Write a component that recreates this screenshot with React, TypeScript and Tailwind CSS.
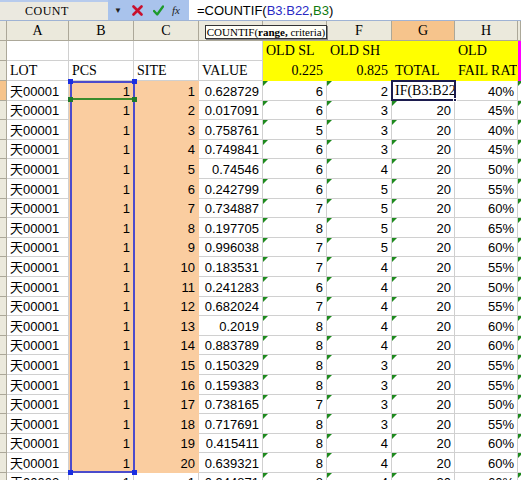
import React from 'react'
import clsx from 'clsx'

const GRID = 'grid grid-cols-[7px_62px_65px_65px_64px_64px_65px_63px_63px_1fr]'
const SERIF = "font-['Liberation_Serif','Noto_Sans_CJK_TC',serif] text-[14px]"
const SANS = "font-['Liberation_Sans','Noto_Sans_CJK_TC',sans-serif] text-[13px]"

const data: [string, number, number, number][] = [
  ['0.628729', 6, 2, 40],
  ['0.017091', 6, 3, 45],
  ['0.758761', 5, 3, 40],
  ['0.749841', 6, 3, 45],
  ['0.74546', 6, 4, 50],
  ['0.242799', 6, 5, 55],
  ['0.734887', 7, 5, 60],
  ['0.197705', 8, 5, 65],
  ['0.996038', 7, 5, 60],
  ['0.183531', 7, 4, 55],
  ['0.241283', 6, 4, 50],
  ['0.682024', 7, 4, 55],
  ['0.2019', 8, 4, 60],
  ['0.883789', 8, 4, 60],
  ['0.150329', 8, 3, 55],
  ['0.159383', 8, 3, 55],
  ['0.738165', 7, 3, 50],
  ['0.717691', 8, 3, 55],
  ['0.415411', 8, 4, 60],
  ['0.639321', 8, 4, 60],
]

type CellProps = {
  children?: React.ReactNode
  className?: string
  right?: boolean
  mark?: boolean
}

// one worksheet cell, gridline on right and bottom
const Cell = ({ children, className, right, mark }: CellProps) => (
  <div
    className={clsx(
      'relative flex items-end pb-[2px] px-[3px] leading-none overflow-hidden whitespace-nowrap border-r border-b border-[#d0d0d0] text-black',
      right && 'justify-end',
      className
    )}
  >
    {mark && (
      <span className="absolute left-0 top-0 w-0 h-0 border-t-[5px] border-r-[5px] border-t-[#1e8a1e] border-r-transparent" />
    )}
    {children}
  </div>
)

const RowHead = ({ active }: { active?: boolean }) => (
  <div
    className={clsx(
      'border-r border-b border-[#aca899]',
      active ? 'bg-[#f6c48c]' : 'bg-[#ebe9dc]'
    )}
  />
)

const DataRow = ({ i, row, lot }: { i: number; row: [string, number, number, number]; lot: string }) => (
  <div className={clsx(GRID, 'h-[19.6px]')}>
    <RowHead active={i === 0} />
    <Cell className={SANS}>{lot}</Cell>
    <Cell right className={clsx(SANS, 'bg-[#facda0] border-transparent')}>1</Cell>
    <Cell right className={clsx(SANS, 'bg-[#facda0] border-transparent')}>{i + 1}</Cell>
    <Cell right className={SANS}>{row[0]}</Cell>
    <Cell right mark className={SANS}>{row[1]}</Cell>
    <Cell right mark className={SANS}>{row[2]}</Cell>
    {i === 0 ? (
      <Cell className={SERIF}>IF(B3:B22</Cell>
    ) : (
      <Cell right mark className={SANS}>20</Cell>
    )}
    <Cell right className={SANS}>{row[3]}%</Cell>
    <Cell mark />
  </div>
)

const App = () => {
  return (
    <div className="relative w-[521px] h-[480px] overflow-hidden bg-white">
      {/* Formula bar */}
      <div className="flex h-[21px] border-b border-[#9fb3d4]">
        <div className={clsx("w-[108px] bg-[#ebe9e0] border-t-2 border-[#b7cbed] flex items-center pl-[25px] text-[12px] font-['Liberation_Serif',serif] tracking-[0.5px]")}>
          COUNT
        </div>
        <div className="w-[81px] bg-[#a9c3ec] flex items-center">
          <span className="ml-[6px] text-[8px] text-[#222]">▼</span>
          <svg className="ml-[10px]" width="11" height="11" viewBox="0 0 11 11">
            <path d="M1.5 1.5 L9.5 9.5 M9.5 1.5 L1.5 9.5" stroke="#c8102e" strokeWidth="2.6" strokeLinecap="round" />
          </svg>
          <svg className="ml-[10px]" width="11" height="11" viewBox="0 0 11 11">
            <path d="M1 6 L4.2 9.5 L10 1.5" stroke="#1d9a2a" strokeWidth="2.3" fill="none" strokeLinecap="round" strokeLinejoin="round" />
          </svg>
          <span className="ml-[8px] text-[11px] italic font-['Liberation_Serif',serif] text-[#222]">fx</span>
        </div>
        <div className="flex-1 bg-white flex items-center pl-[8px] pt-[1px] text-[13px] font-['Liberation_Sans',sans-serif]">
          =COUNTIF(<span className="text-[#2929c4]">B3:B22</span>,<span className="text-[#0e7a0e]">B3</span>)
        </div>
      </div>

      {/* Column headers */}
      <div className={clsx(GRID, 'h-[20px]')}>
        <div className="bg-[#ebe9dc] border-r border-b border-[#aca899]" />
        {['A', 'B', 'C', 'D', 'E', 'F', 'G', 'H', ''].map(l => (
          <div
            key={l}
            className={clsx(
              SERIF,
              'flex items-end justify-center pb-[2px] leading-none border-r border-b border-[#aca899]',
              l === 'G' ? 'bg-[#f6c48c]' : 'bg-[#ebe9dc]'
            )}
          >
            {l}
          </div>
        ))}
      </div>

      {/* Row 1 */}
      <div className={clsx(GRID, 'h-[20px]')}>
        <RowHead />
        <Cell />
        <Cell />
        <Cell />
        <Cell />
        <Cell className={clsx(SERIF, 'bg-[#ffff00] border-transparent')}>OLD SL</Cell>
        <Cell className={clsx(SERIF, 'bg-[#ffff00] border-transparent')}>OLD SH</Cell>
        <Cell className="bg-[#ffff00] border-transparent" />
        <Cell className={clsx(SERIF, 'bg-[#ffff00] border-transparent')}>OLD</Cell>
        <Cell className="bg-[#ff00ff] border-transparent" />
      </div>

      {/* Row 2 */}
      <div className={clsx(GRID, 'h-[20px]')}>
        <RowHead />
        <Cell className={SERIF}>LOT</Cell>
        <Cell className={SERIF}>PCS</Cell>
        <Cell className={SERIF}>SITE</Cell>
        <Cell className={SERIF}>VALUE</Cell>
        <Cell right className={clsx(SERIF, 'bg-[#ffff00] border-transparent')}>0.225</Cell>
        <Cell right className={clsx(SERIF, 'bg-[#ffff00] border-transparent')}>0.825</Cell>
        <Cell className={clsx(SERIF, 'bg-[#ffff00] border-transparent')}>TOTAL</Cell>
        <Cell className={clsx(SERIF, 'bg-[#ffff00] border-transparent')}>FAIL RATE</Cell>
        <Cell className="bg-[#ff00ff] border-transparent" />
      </div>

      {data.map((row, i) => (
        <DataRow key={i} i={i} row={row} lot="天00001" />
      ))}

      {/* Row 23, cut off */}
      <div className={clsx(GRID, 'h-[19.6px]')}>
        <RowHead />
        <Cell className={SANS}>天00002</Cell>
        <Cell right className={SANS}>1</Cell>
        <Cell right className={SANS}>1</Cell>
        <Cell right className={SANS}>0.944871</Cell>
        <Cell right mark className={SANS}>8</Cell>
        <Cell right mark className={SANS}>4</Cell>
        <Cell right mark className={SANS}>20</Cell>
        <Cell right className={SANS}>60%</Cell>
        <Cell mark />
      </div>

      {/* Range highlight B3:B22 */}
      <div className="absolute left-[70px] top-[81px] w-[65px] h-[392px] border-2 border-[#4b4bcc] pointer-events-none" />
      <div className="absolute left-[70px] top-[98px] w-[65px] h-[2px] bg-[#3c8c2c]" />
      <span className="absolute left-[68px] top-[79px] w-[5px] h-[5px] bg-[#1a2ee0]" />
      <span className="absolute left-[132px] top-[79px] w-[5px] h-[5px] bg-[#1a2ee0]" />
      <span className="absolute left-[68px] top-[97px] w-[5px] h-[5px] bg-[#1f7a2a]" />
      <span className="absolute left-[132px] top-[97px] w-[5px] h-[5px] bg-[#1f7a2a]" />
      <span className="absolute left-[68px] top-[470px] w-[5px] h-[5px] bg-[#1a2ee0]" />
      <span className="absolute left-[132px] top-[470px] w-[5px] h-[5px] bg-[#1a2ee0]" />

      {/* Active cell G3 */}
      <div className="absolute left-[391px] top-[80px] w-[65px] h-[21px] border-2 border-[#1c1c4e] pointer-events-none" />
      <span className="absolute left-[453px] top-[98px] w-[4px] h-[4px] bg-[#1c1c4e] border border-white" />

      {/* Function tooltip */}
      <div className="absolute left-[205px] top-[25px] w-[122px] h-[14px] bg-[#fffff8] border border-[#333] flex items-center justify-center text-[11px] leading-none font-['Liberation_Serif',serif] shadow-[1px_1px_0_#888]">
        COUNTIF(<b>range,</b>&nbsp;criteria)
      </div>
    </div>
  )
}

export default App
